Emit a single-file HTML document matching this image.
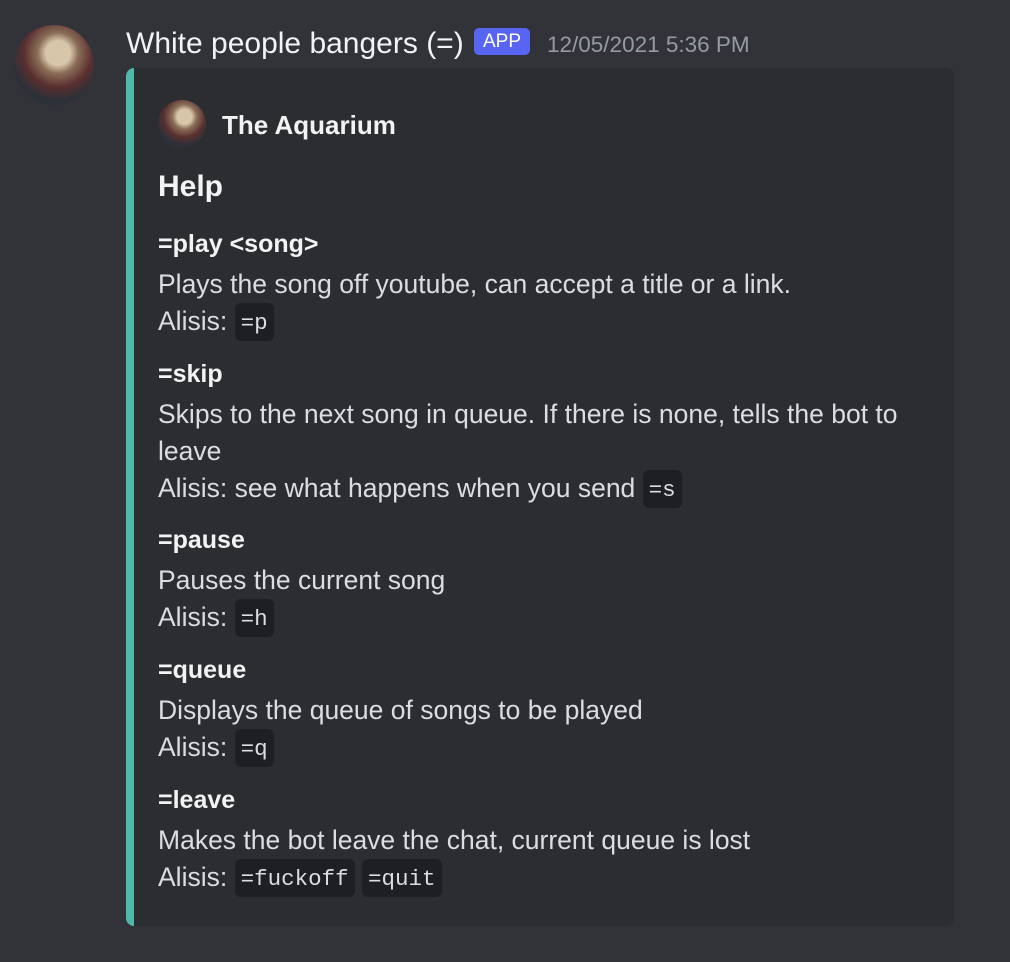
<!DOCTYPE html>
<html><head><meta charset="utf-8"><style>
body{margin:0;width:1010px;height:962px;background:#313338;font-family:"Liberation Sans",sans-serif;position:relative;overflow:hidden}
.a{position:absolute;white-space:nowrap;line-height:38px;height:38px}
.t{color:#dbdee1;font-size:26.5px}
.b{color:#f2f3f5;font-weight:bold;font-size:25px}
code{display:inline-block;font-family:"Liberation Mono",monospace;font-size:22.5px;background:#1e1f22;border-radius:6px;padding:0 6px;height:38px;line-height:40px;vertical-align:top;margin-top:1px;color:#dbdee1}
.av{position:absolute;border-radius:50%;background:radial-gradient(circle at 55% 35%,#d8c6a8 0 18%,#8a6e58 30%,#5a2f2f 50%,#2c3038 70%)}
</style></head><body>
<div class="av" style="left:14px;top:25px;width:80px;height:80px"></div>
<div class="a" style="left:126px;top:25px;color:#f2f3f5;font-size:30px;font-weight:500">White people bangers (=)</div>
<div style="position:absolute;left:474px;top:28px;width:56px;height:27px;background:#5865f2;border-radius:5px;color:#fff;font-size:19px;line-height:27px;text-align:center">APP</div>
<div class="a" style="left:547px;top:26px;color:#949ba4;font-size:22.5px">12/05/2021 5:36 PM</div>
<div style="position:absolute;left:126px;top:68px;width:828px;height:858px;background:#2b2d31;border-radius:8px;border-left:8px solid #4fb8aa;box-sizing:border-box"></div>
<div class="av" style="left:158px;top:100px;width:48px;height:48px"></div>
<div class="a b" style="left:222px;top:106px;font-size:26px">The Aquarium</div>
<div class="a b" style="left:158px;top:168px;font-size:30px">Help</div>

<div class="a b" style="left:158px;top:225px">=play &lt;song&gt;</div>
<div class="a t" style="left:158px;top:265px">Plays the song off youtube, can accept a title or a link.</div>
<div class="a t" style="left:158px;top:302px">Alisis: <code>=p</code></div>

<div class="a b" style="left:158px;top:355px">=skip</div>
<div class="a t" style="left:158px;top:395px">Skips to the next song in queue. If there is none, tells the bot to</div>
<div class="a t" style="left:158px;top:432px">leave</div>
<div class="a t" style="left:158px;top:469px">Alisis: see what happens when you send <code>=s</code></div>

<div class="a b" style="left:158px;top:521px">=pause</div>
<div class="a t" style="left:158px;top:561px">Pauses the current song</div>
<div class="a t" style="left:158px;top:598px">Alisis: <code>=h</code></div>

<div class="a b" style="left:158px;top:651px">=queue</div>
<div class="a t" style="left:158px;top:691px">Displays the queue of songs to be played</div>
<div class="a t" style="left:158px;top:728px">Alisis: <code>=q</code></div>

<div class="a b" style="left:158px;top:781px">=leave</div>
<div class="a t" style="left:158px;top:821px">Makes the bot leave the chat, current queue is lost</div>
<div class="a t" style="left:158px;top:858px">Alisis: <code>=fuckoff</code> <code>=quit</code></div>
</body></html>
